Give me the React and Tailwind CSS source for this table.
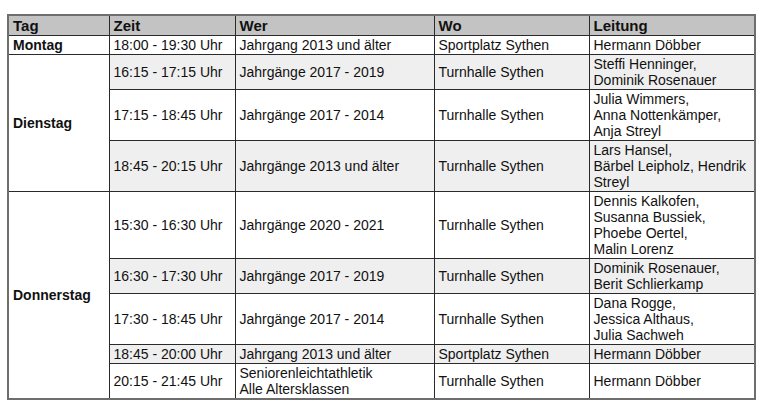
const groups = [
  {
    day: 'Montag',
    rows: [
      { time: '18:00 - 19:30 Uhr', wer: ['Jahrgang 2013 und älter'], wo: 'Sportplatz Sythen', lead: ['Hermann Döbber'], gray: false },
    ],
  },
  {
    day: 'Dienstag',
    rows: [
      { time: '16:15 - 17:15 Uhr', wer: ['Jahrgänge 2017 - 2019'], wo: 'Turnhalle Sythen', lead: ['Steffi Henninger,', 'Dominik Rosenauer'], gray: true },
      { time: '17:15 - 18:45 Uhr', wer: ['Jahrgänge 2017 - 2014'], wo: 'Turnhalle Sythen', lead: ['Julia Wimmers,', 'Anna Nottenkämper,', 'Anja Streyl'], gray: false },
      { time: '18:45 - 20:15 Uhr', wer: ['Jahrgänge 2013 und älter'], wo: 'Turnhalle Sythen', lead: ['Lars Hansel,', 'Bärbel Leipholz, Hendrik', 'Streyl'], gray: true },
    ],
  },
  {
    day: 'Donnerstag',
    rows: [
      { time: '15:30 - 16:30 Uhr', wer: ['Jahrgänge 2020 - 2021'], wo: 'Turnhalle Sythen', lead: ['Dennis Kalkofen,', 'Susanna Bussiek,', 'Phoebe Oertel,', 'Malin Lorenz'], gray: false },
      { time: '16:30 - 17:30 Uhr', wer: ['Jahrgänge 2017 - 2019'], wo: 'Turnhalle Sythen', lead: ['Dominik Rosenauer,', 'Berit Schlierkamp'], gray: true },
      { time: '17:30 - 18:45 Uhr', wer: ['Jahrgänge 2017 - 2014'], wo: 'Turnhalle Sythen', lead: ['Dana Rogge,', 'Jessica Althaus,', 'Julia Sachweh'], gray: false },
      { time: '18:45 - 20:00 Uhr', wer: ['Jahrgang 2013 und älter'], wo: 'Sportplatz Sythen', lead: ['Hermann Döbber'], gray: true },
      { time: '20:15 - 21:45 Uhr', wer: ['Seniorenleichtathletik', 'Alle Altersklassen'], wo: 'Turnhalle Sythen', lead: ['Hermann Döbber'], gray: false },
    ],
  },
]

const cell = 'border border-[#2a2a2a] px-[4px] py-px align-middle whitespace-nowrap'

function Lines({ items }) {
  return items.map((t, i) => <div key={i}>{t}</div>)
}

export default function App() {
  return (
    <div className="min-h-screen bg-white pt-[14px] pl-[7px] font-['Liberation_Sans',Arial,sans-serif] text-[14px] leading-[16px] text-[#111]">
      <table className="table-fixed border-collapse border-2 border-[#6e6e6e] w-[747px]">
        <colgroup>
          <col className="w-[101px]" />
          <col className="w-[126px]" />
          <col className="w-[199px]" />
          <col className="w-[155px]" />
          <col className="w-[166px]" />
        </colgroup>
        <thead>
          <tr className="bg-[#c3c3c3]">
            {['Tag', 'Zeit', 'Wer', 'Wo', 'Leitung'].map((h) => (
              <th key={h} className={cell + ' text-left font-bold text-[15px] leading-[17px]'}>{h}</th>
            ))}
          </tr>
        </thead>
        <tbody>
          {groups.map((g) =>
            g.rows.map((r, i) => (
              <tr key={g.day + i} className={r.gray ? 'bg-[#efefef]' : 'bg-white'}>
                {i === 0 && (
                  <td rowSpan={g.rows.length} className={cell + ' bg-white font-bold'}>{g.day}</td>
                )}
                <td className={cell}>{r.time}</td>
                <td className={cell}><Lines items={r.wer} /></td>
                <td className={cell}>{r.wo}</td>
                <td className={cell}><Lines items={r.lead} /></td>
              </tr>
            ))
          )}
        </tbody>
      </table>
    </div>
  )
}
